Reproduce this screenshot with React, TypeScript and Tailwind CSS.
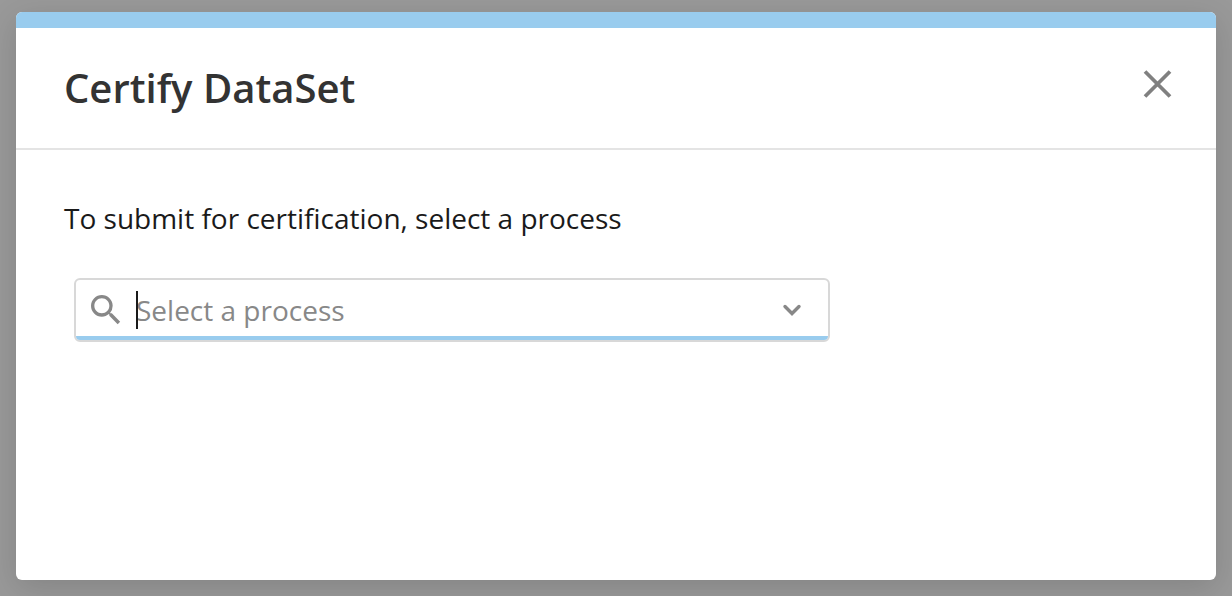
import { useState } from "react";

export default function CertifyDataSetModal() {
  const [process, setProcess] = useState("");

  return (
    <div className="flex min-h-screen flex-col bg-[#999999] px-4 pt-3 pb-4 font-['Open_Sans',sans-serif]">
      <div
        role="dialog"
        aria-modal="true"
        aria-labelledby="modal-title"
        className="flex flex-1 flex-col overflow-hidden rounded-md bg-white shadow-[0_8px_32px_rgba(0,0,0,0.14)]"
      >
        <div className="h-4 bg-[#99ccee]" />

        <header className="flex items-start justify-between border-b-2 border-[#e4e4e4] pt-8 pr-[34px] pb-8 pl-12">
          <h1 id="modal-title" className="text-[40px] leading-14 font-semibold text-[#333333]">
            Certify DataSet
          </h1>
          <button type="button" aria-label="Close" className="p-1 text-[#808080]">
            <svg
              viewBox="0 0 40 40"
              className="h-10 w-10"
              fill="none"
              stroke="currentColor"
              strokeWidth="3.8"
            >
              <path d="M7 7.5l25 25M32 7.5L7 32.5" />
            </svg>
          </button>
        </header>

        <main className="px-12 pt-12">
          <label htmlFor="process" className="block text-[28px] leading-10 text-[#1a1a1a]">
            To submit for certification, select a process
          </label>

          {/* Process picker */}
          <div className="mt-10 ml-[10px] max-w-[756px] rounded-md border-2 border-[#d8d8d8]">
            <div className="flex h-15 items-center rounded-sm border-b-4 border-[#99ccee] pt-1 pr-5 pl-[10px]">
              <svg viewBox="0 0 24 24" className="h-10 w-10 shrink-0 text-[#888888]" fill="currentColor">
                <path d="M15.5 14h-.79l-.28-.27A6.471 6.471 0 0 0 16 9.5 6.5 6.5 0 1 0 9.5 16c1.61 0 3.09-.59 4.23-1.57l.27.28v.79l5 4.99L20.49 19l-4.99-5zm-6 0C7.01 14 5 11.99 5 9.5S7.01 5 9.5 5 14 7.01 14 9.5 11.99 14 9.5 14z" />
              </svg>
              <div className="relative ml-[10px] flex-1">
                <input
                  id="process"
                  type="text"
                  role="combobox"
                  aria-expanded="false"
                  aria-controls="process-options"
                  placeholder="Select a process"
                  value={process}
                  onChange={(e) => setProcess(e.target.value)}
                  className="block h-10 w-full text-[28px] leading-10 text-[#1a1a1a] caret-transparent outline-none placeholder:text-[#888888]"
                />
                {process === "" && <span className="absolute inset-y-px left-0 w-[2px] bg-[#1a1a1a]" />}
              </div>
              <button type="button" aria-label="Show processes" className="text-[#888888]">
                <svg
                  viewBox="0 0 32 32"
                  className="h-8 w-8"
                  fill="none"
                  stroke="currentColor"
                  strokeWidth="3.4"
                  strokeLinecap="round"
                >
                  <path d="M9 12.5l7 7 7-7" />
                </svg>
              </button>
            </div>
          </div>
        </main>
      </div>
    </div>
  );
}
